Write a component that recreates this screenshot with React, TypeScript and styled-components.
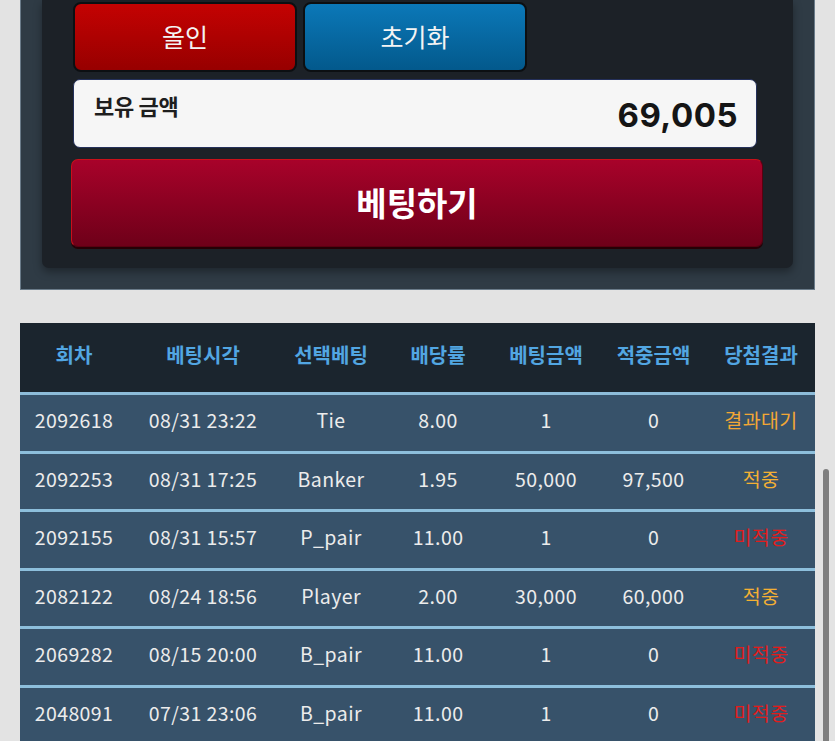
import styled, { createGlobalStyle } from "styled-components";

const GlobalStyle = createGlobalStyle`
  html, body {
    margin: 0;
    padding: 0;
    background: #e3e3e3;
    font-family: "Noto Sans CJK KR", "Noto Sans", sans-serif;
  }
  body {
    overflow: hidden;
  }
`;

const Page = styled.div`
  width: 795px;
  padding: 0 20px;
  display: flex;
  flex-direction: column;
  gap: 33px;
`;

const OuterPanel = styled.div`
  background: #2f3b45;
  border: 1px solid #6a7b89;
  border-top: none;
  padding: 0 21px 21px;
`;

const InnerPanel = styled.div`
  background: #1c2127;
  border-radius: 0 0 7px 7px;
  box-shadow: 0 4px 8px rgba(0, 0, 0, 0.35);
  padding: 2px 36px 21px 31px;
  display: flex;
  flex-direction: column;
`;

const ButtonRow = styled.div`
  display: grid;
  grid-template-columns: repeat(3, 1fr);
  gap: 6px;
`;

const ActionButton = styled.button<{ $tone: "red" | "blue" }>`
  height: 70px;
  border: 2px solid #0c0f12;
  border-radius: 8px;
  background: ${(p) =>
    p.$tone === "red"
      ? "linear-gradient(#c40202, #970000)"
      : "linear-gradient(#0b78b8, #03598c)"};
  color: #f4f4f4;
  font-family: "Noto Sans CJK KR", sans-serif;
  font-size: 25px;
  font-weight: 400;
  padding: 0 0 2px;
  cursor: pointer;
`;

const BalanceBox = styled.div`
  margin-top: 7px;
  height: 67px;
  background: #f6f6f6;
  border: 1px solid #24305a;
  border-radius: 7px;
  display: flex;
  justify-content: space-between;
  padding: 0 18px 0 20px;
`;

const BalanceLabel = styled.span`
  font-size: 22px;
  font-weight: 700;
  color: #1e1e1e;
  margin-top: 9px;
  letter-spacing: -0.3px;
`;

const BalanceValue = styled.span`
  font-family: Inter, "Noto Sans", sans-serif;
  font-size: 33px;
  font-weight: 700;
  color: #151515;
  letter-spacing: 0.5px;
  align-self: center;
  margin-top: 2px;
`;

const BetButton = styled.button`
  margin: 11px -6px 0 -2px;
  height: 88px;
  border: 1px solid #5a0010;
  border-top-color: #c8101a;
  border-left-color: #c8101a;
  border-radius: 7px;
  background: linear-gradient(#a8022a, #6e0019);
  box-shadow: 0 2px 0 #250006;
  color: #ffffff;
  font-family: "Noto Sans CJK KR", sans-serif;
  font-size: 33px;
  font-weight: 700;
  padding: 0 0 3px;
  cursor: pointer;
`;

const Table = styled.div`
  display: flex;
  flex-direction: column;
  background: #37526a;
`;

const cols = "108fr 150fr 106fr 108fr 108fr 107fr 108fr";

const HeadRow = styled.div`
  display: grid;
  grid-template-columns: ${cols};
  height: 69px;
  background: #1b252e;
  border-bottom: 3px solid #8dbcd9;
  align-items: center;
`;

const HeadCell = styled.div`
  text-align: center;
  font-size: 20px;
  font-weight: 700;
  color: #52a6e2;
  padding-bottom: 6px;
`;

const Row = styled.div`
  display: grid;
  grid-template-columns: ${cols};
  height: 55.5px;
  border-bottom: 3px solid #8dbfdc;
  align-items: center;
`;

const Cell = styled.div<{ $color?: string }>`
  text-align: center;
  font-size: 19.5px;
  font-weight: 400;
  letter-spacing: 0.4px;
  color: ${(p) => p.$color ?? "#ececec"};
  padding-bottom: 6px;
  white-space: nowrap;
`;

const ScrollThumb = styled.div`
  position: fixed;
  right: 6px;
  top: 469px;
  width: 6px;
  height: 320px;
  border-radius: 3px;
  background: #7e7e7e;
`;

const heads = ["회차", "베팅시각", "선택베팅", "배당률", "베팅금액", "적중금액", "당첨결과"];

type Result = "wait" | "win" | "lose";

const rows: [string, string, string, string, string, string, Result][] = [
  ["2092618", "08/31 23:22", "Tie", "8.00", "1", "0", "wait"],
  ["2092253", "08/31 17:25", "Banker", "1.95", "50,000", "97,500", "win"],
  ["2092155", "08/31 15:57", "P_pair", "11.00", "1", "0", "lose"],
  ["2082122", "08/24 18:56", "Player", "2.00", "30,000", "60,000", "win"],
  ["2069282", "08/15 20:00", "B_pair", "11.00", "1", "0", "lose"],
  ["2048091", "07/31 23:06", "B_pair", "11.00", "1", "0", "lose"],
];

const resultText: Record<Result, string> = { wait: "결과대기", win: "적중", lose: "미적중" };
const resultColor: Record<Result, string> = { wait: "#f2a735", win: "#f4b033", lose: "#e21c1c" };

export default function App() {
  return (
    <>
      <GlobalStyle />
      <Page>
        <OuterPanel>
          <InnerPanel>
            <ButtonRow>
              <ActionButton $tone="red">올인</ActionButton>
              <ActionButton $tone="blue">초기화</ActionButton>
            </ButtonRow>
            <BalanceBox>
              <BalanceLabel>보유 금액</BalanceLabel>
              <BalanceValue>69,005</BalanceValue>
            </BalanceBox>
            <BetButton>베팅하기</BetButton>
          </InnerPanel>
        </OuterPanel>

        <Table>
          <HeadRow>
            {heads.map((h) => (
              <HeadCell key={h}>{h}</HeadCell>
            ))}
          </HeadRow>
          {rows.map((r) => (
            <Row key={r[0]}>
              {r.slice(0, 6).map((v, i) => (
                <Cell key={i}>{v}</Cell>
              ))}
              <Cell $color={resultColor[r[6]]}>{resultText[r[6]]}</Cell>
            </Row>
          ))}
        </Table>
      </Page>
      <ScrollThumb />
    </>
  );
}
